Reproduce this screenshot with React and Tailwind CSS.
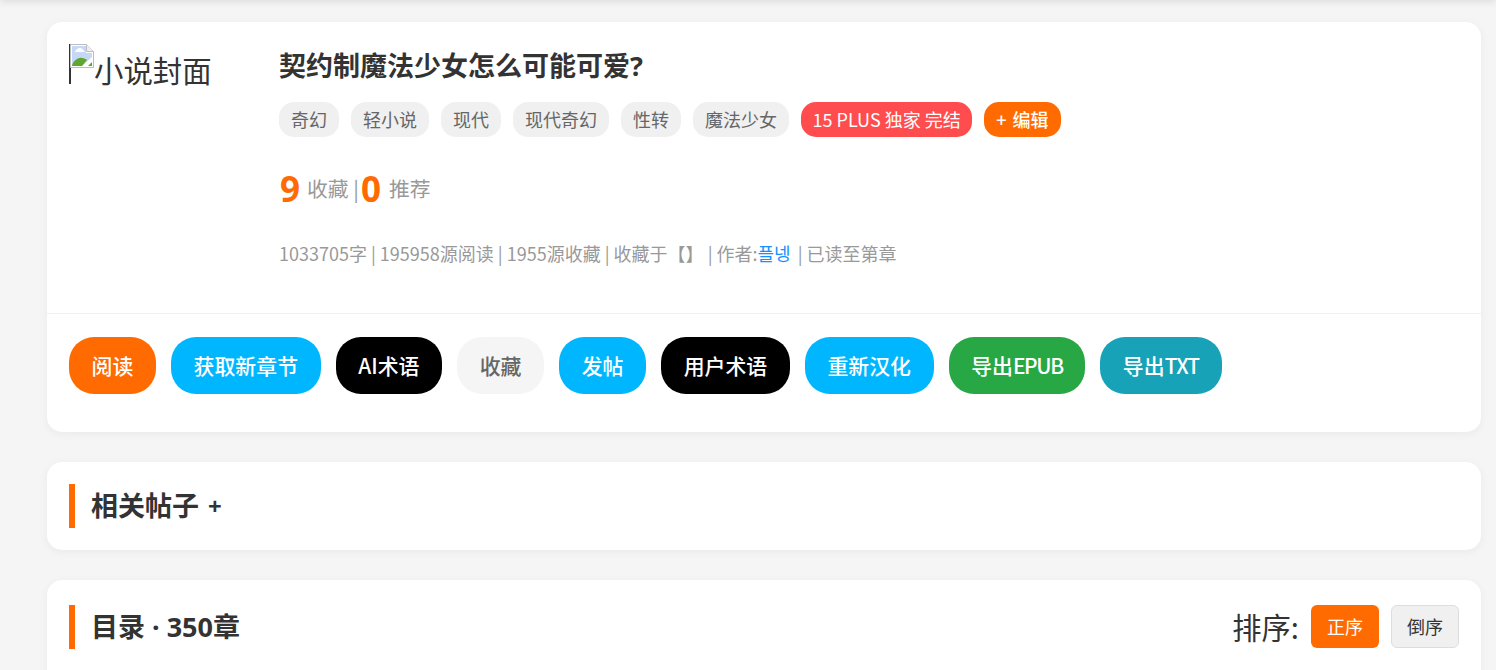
const tags = ['奇幻', '轻小说', '现代', '现代奇幻', '性转', '魔法少女'];

const actions = [
  { label: '阅读', color: 'bg-[#ff6b00] text-white' },
  { label: '获取新章节', color: 'bg-[#00b7ff] text-white' },
  { label: 'AI术语', color: 'bg-black text-white' },
  { label: '收藏', color: 'bg-[#f5f5f5] text-[#666]' },
  { label: '发帖', color: 'bg-[#00b7ff] text-white' },
  { label: '用户术语', color: 'bg-black text-white' },
  { label: '重新汉化', color: 'bg-[#00b7ff] text-white' },
  { label: <>导出<span className="tracking-[-1.4px]">EPUB</span></>, color: 'bg-[#28a745] text-white' },
  { label: <>导出<span className="tracking-[-0.8px]">TXT</span></>, color: 'bg-[#17a2b8] text-white' },
];

const cjk = { fontFamily: '"Noto Sans CJK SC", "Noto Sans", sans-serif' };

function BrokenImage() {
  return (
    <svg width="24" height="24" viewBox="0 0 24 24" className="shrink-0 -ml-px">
      <path d="M0.5 0.5h16l7 7v16h-23z" fill="#fff" stroke="#bdbdbd" />
      <path d="M2 2h14v7h6v4L12 22H2z" fill="#c5d9f7" />
      <path d="M5 8c1-3 3-4 5-4s3 2 5 4z" fill="#fff" />
      <path d="M2 22c1-5 6-9 10-8 2 0 4 1 5 2l-5 6z" fill="#5ea531" />
      <path d="M18 22l4-4v4z" fill="#5ea531" />
      <path d="M16.5 0.5v7h7" fill="#eeeeee" stroke="#bdbdbd" />
    </svg>
  );
}

function SectionTitle({ children }) {
  return (
    <h2 className="border-l-[6px] border-[#ff6b00] pl-[16px] h-11 flex items-center text-[27px] font-bold text-[#333] whitespace-pre">
      {children}
    </h2>
  );
}

export default function App() {
  return (
    <div
      className="h-[670px] overflow-hidden bg-[#f5f5f5] text-[#333] relative"
      style={{ fontFamily: '"Noto Sans", "Noto Sans CJK SC", sans-serif' }}
    >
      <div className="absolute top-[-10px] left-0 right-0 h-[10px] shadow-[0_1px_8px_rgba(0,0,0,0.12)]" />

      <div className="pl-[47px] pr-[15px] pt-[22px] flex flex-col gap-[30px]">
        {/* book info */}
        <div className="bg-white rounded-[15px] shadow-[0_2px_10px_rgba(0,0,0,0.05)] h-[410px]">
          <div className="flex px-[22px] pt-[22px] h-[292px] border-b border-[#f0f0f0]">
            <div className="w-[140px] h-10 mr-[70px] shrink-0 flex items-start border-l-2 border-[#333] text-[29.4px] leading-[50px] whitespace-nowrap" style={cjk}>
              <BrokenImage />
              <span className="text-[#333]">小说封面</span>
            </div>
            <div className="flex-1">
              <h1 className="text-[27px] font-bold leading-[44px] text-[#333]">契约制魔法少女怎么可能可爱?</h1>
              <div className="flex gap-3 mt-[14px]" style={cjk}>
                {tags.map((tag) => (
                  <span key={tag} className="bg-[#f0f0f0] text-[#666] text-[18px] h-[35px] px-3 rounded-[15px] flex items-center">
                    {tag}
                  </span>
                ))}
                <span className="bg-[#ff4d4f] text-white text-[18px] h-[35px] px-[11.5px] rounded-[15px] flex items-center whitespace-pre">
                  15 PLUS 独家 完结
                </span>
                <span className="bg-[#ff6b00] text-white text-[18px] font-medium h-[35px] px-3 rounded-[15px] flex items-center whitespace-pre">
                  + <span className="ml-[2px]">编辑</span>
                </span>
              </div>
              <div className="flex items-center mt-[28px] h-12 text-[20.8px] text-[#999]">
                <span className="ml-px text-[35px] font-bold text-[#ff6b00]">9</span>
                <span className="ml-[7px]" style={cjk}>收藏 |</span>
                <span className="ml-[2px] text-[35px] font-bold text-[#ff6b00]">0</span>
                <span className="ml-2" style={cjk}>推荐</span>
              </div>
              <p className="mt-[28px] text-[18px] leading-6 text-[#999]" style={cjk}>
                1033705字 | 195958源阅读 | 1955源收藏 | 收藏于【】 | 作者:
                <span className="text-[#1890ff] pr-[3px]">플넹</span> | 已读至第章
              </p>
            </div>
          </div>
          <div className="flex gap-[15px] px-[22px] pt-[23px]" style={cjk}>
            {actions.map((a, i) => (
              <button key={i} className={`h-[57px] px-[22.6px] rounded-[25px] text-[20.9px] font-medium whitespace-nowrap ${a.color}`}>
                {a.label}
              </button>
            ))}
          </div>
        </div>

        {/* related posts */}
        <div className="bg-white rounded-[15px] shadow-[0_2px_10px_rgba(0,0,0,0.05)] h-[88px] p-[22px]">
          <SectionTitle>
            相关帖子 <span className="ml-[2px] text-[24px]">+</span>
          </SectionTitle>
        </div>

        {/* chapters */}
        <div className="bg-white rounded-t-[15px] shadow-[0_2px_10px_rgba(0,0,0,0.05)] h-[120px] px-[22px] pt-[25px] flex justify-between items-start">
          <SectionTitle>目录 · 350章</SectionTitle>
          <div className="flex items-center gap-3 h-[43px]" style={cjk}>
            <span className="text-[29.3px] text-[#333]">排序:</span>
            <button className="h-[43px] w-[68px] rounded-md bg-[#ff6b00] text-white text-[18px]">正序</button>
            <button className="h-[43px] w-[68px] rounded-md bg-[#f0f0f0] border border-[#ddd] text-[#333] text-[18px]">倒序</button>
          </div>
        </div>
      </div>
    </div>
  );
}
